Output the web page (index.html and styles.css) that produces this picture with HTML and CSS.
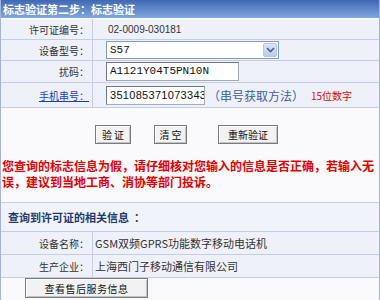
FILE: index.html
```html
<!DOCTYPE html>
<html lang="zh-CN">

<head>
    <meta charset="UTF-8">
    <title>标志验证</title>
    <link rel="stylesheet" href="styles.css">
</head>

<body>
    <div class="page">
        <!-- 标题栏 -->
        <div class="title">标志验证第二步：标志验证</div>

        <!-- 输入表单 -->
        <div class="row row-1">
            <div class="label">许可证编号：</div>
            <div class="value"><span class="plain">02-0009-030181</span></div>
        </div>
        <div class="row row-2">
            <div class="label">设备型号：</div>
            <div class="value">
                <div class="select">
                    <span class="select-text">S57</span>
                    <span class="select-btn">
                        <svg width="9" height="6" viewBox="0 0 9 6"><path d="M1 1 L4.5 4.5 L8 1" fill="none" stroke="#4d6185" stroke-width="1.6"/></svg>
                    </span>
                </div>
            </div>
        </div>
        <div class="row row-3">
            <div class="label">扰码：</div>
            <div class="value"><div class="input input-code">A1121Y04T5PN10N</div></div>
        </div>
        <div class="row row-4">
            <div class="label"><a href="#" class="link">手机串号：</a></div>
            <div class="value">
                <div class="input input-serial">351085371073343</div>
                <span class="howto">（串号获取方法）</span>
                <span class="hint">15位数字</span>
            </div>
        </div>

        <!-- 操作按钮 -->
        <div class="actions">
            <button class="btn btn-verify">验 证</button>
            <button class="btn btn-clear">清 空</button>
            <button class="btn btn-retry">重新验证</button>
        </div>

        <!-- 提示信息 -->
        <div class="warn">您查询的标志信息为假，请仔细核对您输入的信息是否正确，若输入无误，建议到当地工商、消协等部门投诉。</div>

        <!-- 许可证信息 -->
        <div class="info-head">查询到许可证的相关信息&nbsp;&nbsp;：</div>
        <div class="info-row">
            <div class="label">设备名称：</div>
            <div class="info-value">GSM双频GPRS功能数字移动电话机</div>
        </div>
        <div class="info-row">
            <div class="label">生产企业：</div>
            <div class="info-value">上海西门子移动通信有限公司</div>
        </div>
        <div class="more">
            <button class="btn btn-more">查看售后服务信息</button>
        </div>
    </div>
</body>

</html>
```

FILE: styles.css
```css
body {
    margin: 0;
    font-family: "Noto Sans CJK SC", sans-serif;
    font-size: 10px;
    color: #333;
    background: #fff;
}

.page {
    width: 378px;
    height: 300px;
    border-left: 1px solid #a6b2d6;
    border-right: 1px solid #a6b2d6;
    background: #fafafc;
}

.title {
    height: 18px;
    line-height: 18px;
    padding-left: 2px;
    color: #fff;
    font-size: 11px;
    font-weight: bold;
    background: linear-gradient(#4069b4, #80a7df);
    border-bottom: 1px solid #fff;
}

.row {
    display: flex;
    background: #eef1f9;
    border-bottom: 1px solid #c6cde3;
}

.row-1 { height: 20px; }
.row-2 { height: 20px; }
.row-3 { height: 21px; }
.row-4 { height: 24px; }

.label {
    width: 88px;
    padding-right: 3px;
    border-right: 1px solid #c6cde3;
    display: flex;
    align-items: center;
    justify-content: flex-end;
    white-space: nowrap;
}

.value {
    flex: 1;
    display: flex;
    align-items: center;
    padding-left: 13px;
}

.plain {
    font-family: "Liberation Sans", sans-serif;
    font-size: 10px;
    color: #333;
    padding-left: 2px;
}

.select {
    width: 171px;
    height: 16px;
    border: 1px solid #7f9db9;
    background: #fff;
    display: flex;
    align-items: center;
    justify-content: space-between;
}

.select-text,
.input-code {
    font-family: "Liberation Mono", monospace;
    font-size: 11px;
    color: #111;
}

.select-text {
    padding-left: 3px;
}

.select-btn {
    width: 14px;
    height: 14px;
    margin-right: 1px;
    border: 1px solid #b3c4ea;
    box-sizing: border-box;
    border-radius: 2px;
    background: linear-gradient(#dce6fb, #b9cbf3);
    display: flex;
    align-items: center;
    justify-content: center;
}

.input {
    height: 17px;
    line-height: 17px;
    border: 1px solid #a4abb8;
    border-top-color: #6f7684;
    border-left-color: #6f7684;
    background: #fff;
    padding-left: 3px;
    overflow: hidden;
    white-space: nowrap;
}

.input-code {
    width: 128px;
}

.input-serial {
    width: 94px;
    font-family: "Liberation Sans", sans-serif;
    font-size: 11px;
    letter-spacing: 0.3px;
    color: #111;
}

.link {
    color: #1b3fc4;
    text-decoration: underline;
}

.howto {
    font-size: 12px;
    color: #3d5d9d;
    margin-left: 3px;
}

.hint {
    color: #e60000;
    font-size: 10px;
    margin-left: 7px;
}

.actions {
    height: 41px;
    padding-top: 17px;
    box-sizing: border-box;
    display: flex;
    align-items: flex-start;
    padding-left: 94px;
}

.btn {
    height: 19px;
    padding: 0;
    font-family: "Noto Sans CJK SC", sans-serif;
    font-size: 10px;
    color: #111;
    background: #f2f2f2;
    border: 1px solid #7a7a7a;
    box-shadow: inset 1px 1px #fff, inset -1px -1px #c4c4c4;
    cursor: pointer;
}

.btn-verify { width: 36px; }
.btn-clear { width: 33px; margin-left: 23px; }
.btn-retry { width: 60px; margin-left: 31px; }

.warn {
    height: 54px;
    padding: 9px 0 0 1px;
    box-sizing: border-box;
    color: #e00000;
    font-size: 12px;
    font-weight: bold;
    line-height: 16px;
    border-bottom: 1px solid #c6cde3;
}

.info-head {
    height: 28px;
    line-height: 28px;
    padding-left: 7px;
    font-size: 11px;
    font-weight: bold;
    color: #1f3a6e;
    background: #f0f3fa;
    border-bottom: 1px solid #c6cde3;
}

.info-row {
    display: flex;
    height: 22px;
    background: #eef1f9;
    border-bottom: 1px solid #c6cde3;
}

.info-value {
    flex: 1;
    display: flex;
    align-items: center;
    padding-left: 2px;
    font-size: 11px;
    color: #333;
}

.more {
    padding-left: 24px;
}

.btn-more {
    width: 123px;
    height: 20px;
    letter-spacing: 0.5px;
}
```
